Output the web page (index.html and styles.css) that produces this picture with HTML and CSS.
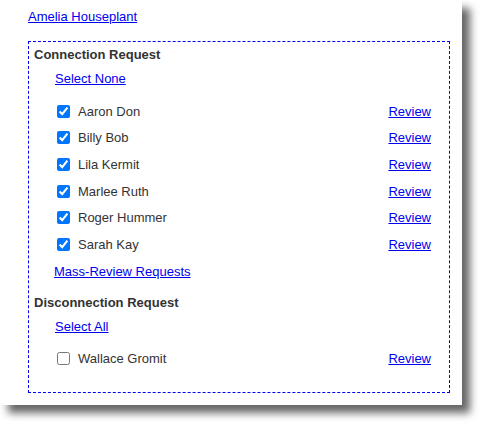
FILE: index.html
```html
<!DOCTYPE html>
<html>
<head>
<meta charset="utf-8">
<link rel="stylesheet" href="styles.css">
</head>
<body>
<div class="window">
  <a class="user" href="#">Amelia Houseplant</a>
  <div class="box">
    <div class="heading">Connection Request</div>
    <a class="select" href="#">Select None</a>
    <div class="list">
      <label class="row"><input type="checkbox" checked><span class="name">Aaron Don</span><a href="#" class="review">Review</a></label>
      <label class="row"><input type="checkbox" checked><span class="name">Billy Bob</span><a href="#" class="review">Review</a></label>
      <label class="row"><input type="checkbox" checked><span class="name">Lila Kermit</span><a href="#" class="review">Review</a></label>
      <label class="row"><input type="checkbox" checked><span class="name">Marlee Ruth</span><a href="#" class="review">Review</a></label>
      <label class="row"><input type="checkbox" checked><span class="name">Roger Hummer</span><a href="#" class="review">Review</a></label>
      <label class="row"><input type="checkbox" checked><span class="name">Sarah Kay</span><a href="#" class="review">Review</a></label>
      <div class="row mass"><a href="#">Mass-Review Requests</a></div>
    </div>
    <div class="heading second">Disconnection Request</div>
    <a class="select" href="#">Select All</a>
    <div class="list">
      <label class="row"><input type="checkbox"><span class="name">Wallace Gromit</span><a href="#" class="review">Review</a></label>
    </div>
  </div>
</div>
</body>
</html>
```

FILE: styles.css
```css
html, body {
  margin: 0;
  padding: 0;
  background: #fff;
}
body {
  min-height: 428px;
  font-family: "Liberation Sans", Arial, sans-serif;
  font-size: 13px;
  line-height: 15px;
  color: #333;
}
a {
  color: #0000ee;
  text-decoration: underline;
}
.window {
  box-sizing: border-box;
  width: 462px;
  height: 405px;
  padding: 9px 0 0 28px;
  background: #fff;
  box-shadow: 8px 8px 8px rgba(0, 0, 0, 0.6);
}
.user {
  display: inline-block;
}
.box {
  box-sizing: border-box;
  width: 422px;
  margin-top: 17px;
  border: 1px dashed #0000ff;
  padding: 5px 5px 20px 5px;
}
.heading {
  font-weight: bold;
}
.heading.second {
  margin-top: 10px;
}
.select {
  display: inline-block;
  margin: 9px 0 0 21px;
}
.list {
  margin: 12px 0 0 20px;
}
.row {
  display: flex;
  align-items: center;
  height: 26.67px;
  padding-right: 13px;
}
.row input {
  width: 13px;
  height: 13px;
  margin: 0 8px 0 3px;
}
.name {
  flex: 1;
}
.mass {
  padding-right: 0;
}
```
